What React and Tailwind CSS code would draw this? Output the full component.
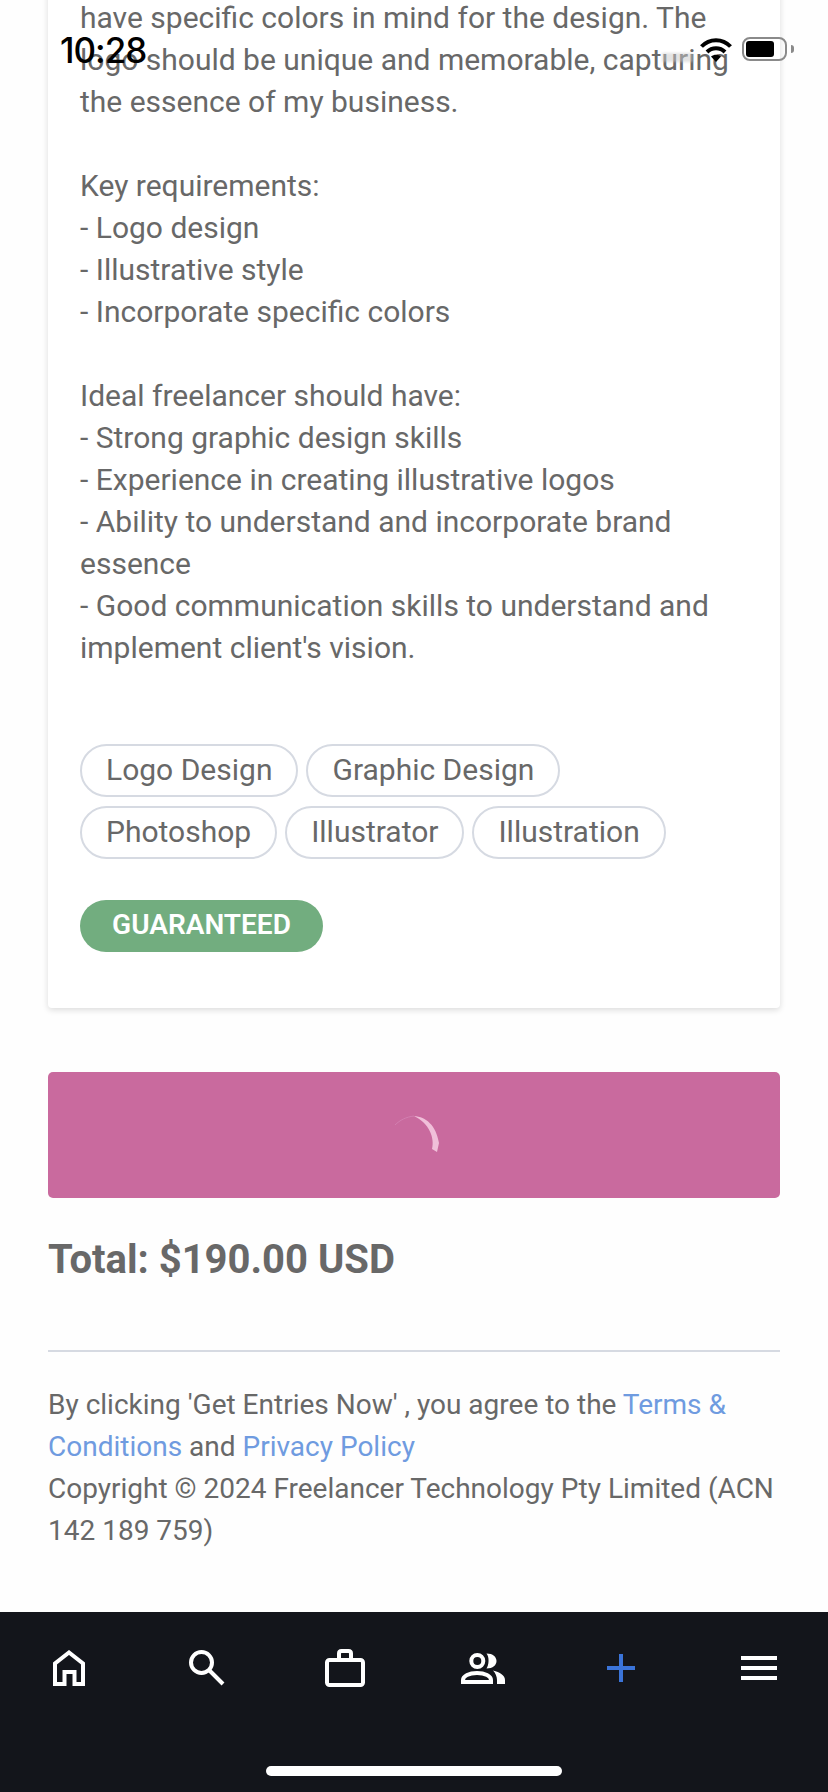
import React from "react";

const font = "font-['Roboto',sans-serif]";

const tagRows = [
  ["Logo Design", "Graphic Design"],
  ["Photoshop", "Illustrator", "Illustration"],
];

function HomeIcon() {
  return (
    <svg width="32" height="36" viewBox="0 0 32 36" fill="none" stroke="white" strokeWidth="4">
      <path d="M2 34V13.5L16 2.5l14 11V34h-8.5V22h-10v12z" />
    </svg>
  );
}

function SearchIcon() {
  return (
    <svg width="36" height="36" viewBox="0 0 36 36" fill="none" stroke="white" strokeWidth="4">
      <circle cx="12.5" cy="12.5" r="10.5" />
      <path d="M20 20l14 14" />
    </svg>
  );
}

function BriefcaseIcon() {
  return (
    <svg width="40" height="38" viewBox="0 0 40 38" fill="none" stroke="white" strokeWidth="4">
      <rect x="2" y="11" width="36" height="25" rx="2.5" />
      <path d="M14 10V4.500Q14 2 16.500 2h7Q26 2 26 4.500V10" />
    </svg>
  );
}

function PeopleIcon() {
  return (
    <svg width="44" height="31" viewBox="0 0 44 31" fill="none">
      <circle cx="16.3" cy="8" r="6" stroke="white" strokeWidth="4" />
      <path d="M2 29v-2c0-4 6-7 14-7s14 3 14 7v2z" stroke="white" strokeWidth="4" />
      <path d="M25.500.5C32 .5 35.500 4 35.500 8S32 15.500 25.500 15.500C28 12 28.500 4 25.500.5z" fill="white" />
      <path d="M32 17.500c7 1.500 12 5 12 9.500v4h-8v-4c0-3.500-1.500-7-4-9.500z" fill="white" />
    </svg>
  );
}

function WifiIcon() {
  return (
    <svg width="32" height="25" viewBox="0 0 32 25" fill="none" stroke="black" strokeWidth="4">
      <path d="M1.500 9.500C9.500 1 22.500 1 30.500 9.500" />
      <path d="M7 15c5-5 13-5 18 0" />
      <path d="M11 19.500c3-2.500 7-2.500 10 0L16 25z" fill="black" stroke="none" />
    </svg>
  );
}

function StatusBar() {
  return (
    <div className="absolute top-[32px] left-0 right-0 h-[36px]">
      <span className="absolute left-[60px] top-0 text-[35px] leading-[36px] font-medium text-black font-['Inter',sans-serif] tracking-[-1px]">
        10:28
      </span>
      <div className="absolute left-[662px] top-[21px] w-[31px] h-[9px] bg-[#c8c8c8]/50 blur-[1px]" />
      <div className="absolute left-[700px] top-[5px]">
        <WifiIcon />
      </div>
      <div className="absolute left-[742px] top-[5px] w-[45px] h-[24px] border-2 border-[#8a8a8a] rounded-[8px] p-[2px] pr-[11px]">
        <div className="w-full h-full bg-black rounded-[3px]" />
      </div>
      <div className="absolute left-[791px] top-[13px] w-[3px] h-[8px] bg-[#8a8a8a] rounded-r-[3px]" />
    </div>
  );
}

export default function App() {
  return (
    <div className={`relative w-[828px] h-[1792px] overflow-hidden bg-[#fefefe] flex flex-col text-[#686868] ${font}`}>
      <main className="flex-1 px-[48px]">
        <section className="-mt-[23px] pt-[20px] pb-[56px] px-[32px] bg-white rounded-b-[4px] shadow-[0_2px_6px_rgba(0,0,0,0.14)] text-[30px] leading-[42px]">
          <p className="mb-[42px]">
            have specific colors in mind for the design. The logo should be unique and memorable, capturing the essence of my business.
          </p>
          <p>Key requirements:</p>
          <p>- Logo design</p>
          <p>- Illustrative style</p>
          <p className="mb-[42px]">- Incorporate specific colors</p>
          <p>Ideal freelancer should have:</p>
          <p>- Strong graphic design skills</p>
          <p>- Experience in creating illustrative logos</p>
          <p>- Ability to understand and incorporate brand essence</p>
          <p>- Good communication skills to understand and implement client's vision.</p>

          <div className="mt-[75px] flex flex-col gap-[9px]">
            {tagRows.map((row, i) => (
              <div key={i} className="flex gap-[8px]">
                {row.map((tag) => (
                  <span
                    key={tag}
                    className="h-[53px] px-[24px] pb-[2px] flex items-center border-2 border-[#d6dae2] rounded-full"
                  >
                    {tag}
                  </span>
                ))}
              </div>
            ))}
          </div>

          <div className="mt-[41px] w-[243px] h-[52px] pb-[2px] flex items-center justify-center rounded-full bg-[#72ad7f] text-white text-[28px] font-semibold">
            GUARANTEED
          </div>
        </section>

        <button className="mt-[64px] w-full h-[126px] flex items-center justify-center bg-[#c96a9e] rounded-[5px]">
          <svg className="ml-[3px]" width="60" height="60" viewBox="0 0 60 60" fill="none">
            <path d="M9 20C14 15 20 12 28 11" stroke="#d27fb0" strokeWidth="1" />
            <path d="M28 11C40 12 50 20 53 38L51 47 46 44C49 33 43 18 28 11z" fill="#f0bfd9" />
          </svg>
        </button>

        <h2 className="mt-[40px] text-[40px] leading-[44px] font-bold">Total: $190.00 USD</h2>

        <hr className="mt-[68px] border-t-2 border-[#d6dae2]" />

        <p className="mt-[32px] text-[28px] leading-[42px]">
          By clicking 'Get Entries Now' , you agree to the{" "}
          <a className="text-[#6f9be0]">Terms &amp; Conditions</a> and{" "}
          <a className="text-[#6f9be0]">Privacy Policy</a>
          <br />
          Copyright © 2024 Freelancer Technology Pty Limited (ACN 142 189 759)
        </p>
      </main>

      <nav className="h-[180px] shrink-0 bg-[#13151b] flex flex-col items-center">
        <div className="w-full h-[112px] grid grid-cols-6 items-center justify-items-center">
          <HomeIcon />
          <SearchIcon />
          <BriefcaseIcon />
          <PeopleIcon />
          <svg width="28" height="28" viewBox="0 0 28 28" stroke="#3b74d9" strokeWidth="4">
            <path d="M14 0v28M0 14h28" />
          </svg>
          <div className="w-[36px] flex flex-col gap-[6px]">
            <div className="h-[4px] bg-white" />
            <div className="h-[4px] bg-white" />
            <div className="h-[4px] bg-white" />
          </div>
        </div>
        <div className="mt-[42px] w-[296px] h-[10px] bg-white rounded-full" />
      </nav>

      <StatusBar />
    </div>
  );
}
